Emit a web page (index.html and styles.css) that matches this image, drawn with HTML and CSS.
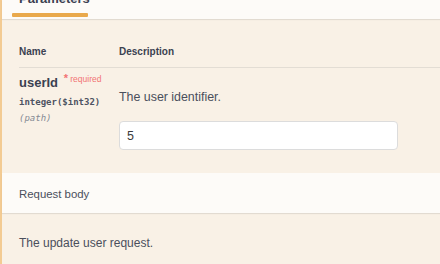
FILE: index.html
```html
<!DOCTYPE html>
<html lang="en">
<head>
  <meta charset="UTF-8">
  <meta name="viewport" content="width=device-width, initial-scale=1.0">
  <title>PUT /users/{userId}</title>
  <link rel="stylesheet" href="styles.css">
</head>
<body>
  <div class="opblock opblock-put">
    <div class="section-header tabs-header">
      <div class="tab active">
        <h4 class="tab-title">Parameters</h4>
      </div>
    </div>

    <div class="parameters">
      <div class="param-row param-head">
        <div class="col-name">Name</div>
        <div class="col-desc">Description</div>
      </div>
      <div class="param-row">
        <div class="col-name">
          <div class="param-name">userId <span class="required"><b>*</b> required</span></div>
          <div class="param-type">integer($int32)</div>
          <div class="param-in">(path)</div>
        </div>
        <div class="col-desc">
          <p class="param-text">The user identifier.</p>
          <input class="param-input" type="text" name="userId" value="5">
        </div>
      </div>
    </div>

    <div class="section-header body-header">
      <h4 class="body-title">Request body</h4>
    </div>
    <div class="body-desc">
      <p>The update user request.</p>
    </div>
  </div>
</body>
</html>
```

FILE: styles.css
```css
:root {
  --main-font: "Liberation Sans", Arial, sans-serif;
  --mono-font: "DejaVu Sans Mono", "Liberation Mono", monospace;
  --text-color: #3b4151;
  --put-color: #e9a94c;
  --put-border: #f3cb93;
  --put-bg: #f9f1e6;
  --header-bg: #fdfbf8;
}

html {
  box-sizing: border-box;
  font-family: var(--main-font);
  color: var(--text-color);
}

*,
*::before,
*::after {
  box-sizing: inherit;
}

body {
  margin: 0;
  background-color: #fff;
}

h4,
p {
  margin: 0;
}

.opblock {
  min-height: 264px;
  background-color: var(--put-bg);
  border-left: 2px solid var(--put-border);
}

.section-header {
  background-color: var(--header-bg);
  box-shadow: 0 1px 1px rgba(0, 0, 0, 0.09);
  position: relative;
}

.tabs-header {
  display: flow-root;
  height: 19px;
}

.tab {
  margin-left: 10px;
  width: 76px;
}

.tab-title {
  margin-top: -9px;
  padding-left: 7px;
  font-size: 13px;
  line-height: 15px;
  font-weight: bold;
}

.tab.active::after {
  content: "";
  display: block;
  height: 4px;
  margin-top: 7px;
  background-color: var(--put-color);
  border-radius: 1px;
}

.parameters {
  margin-left: 17px;
  padding-top: 27px;
  padding-bottom: 23px;
}

.param-row {
  display: grid;
  grid-template-columns: 100px 1fr;
}

.param-head {
  font-size: 10px;
  line-height: 12px;
  font-weight: bold;
  padding-bottom: 9px;
  border-bottom: 1px solid #e3ddd4;
}

.param-name {
  margin-top: 7px;
  font-size: 13px;
  line-height: 16px;
  font-weight: bold;
}

.required {
  position: relative;
  top: -5px;
  margin-left: 2px;
  font-size: 8.5px;
  font-weight: normal;
  color: #f27474;
}

.required b {
  font-size: 11px;
}

.param-type {
  margin-top: 2px;
  font-family: var(--mono-font);
  font-size: 9px;
  line-height: 16px;
  font-weight: bold;
  color: #4d5362;
}

.param-in {
  font-family: var(--mono-font);
  font-size: 9px;
  line-height: 16px;
  font-style: italic;
  color: #858a94;
}

.param-text {
  margin-top: 20px;
  font-size: 12.4px;
  line-height: 18px;
  color: #4a4f5c;
}

.param-input {
  display: block;
  margin-top: 15px;
  width: 279px;
  height: 29px;
  padding: 0 7px;
  font-family: var(--main-font);
  font-size: 12.5px;
  color: #3b3b3b;
  background-color: #fff;
  border: 1px solid #dcdcdc;
  border-radius: 4px;
}

.body-header {
  height: 40px;
  padding-left: 17px;
}

.body-title {
  font-size: 11.4px;
  line-height: 42px;
  font-weight: normal;
  color: #4a4f5c;
}

.body-desc {
  padding: 21px 17px 0;
  font-size: 12px;
  line-height: 18px;
  color: #4a4f5c;
}
```
